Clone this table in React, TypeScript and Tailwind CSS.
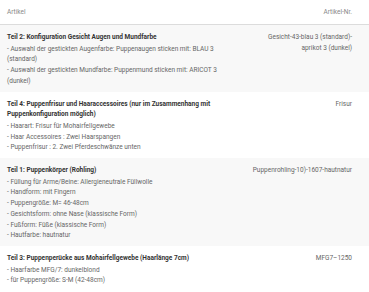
const rows = [
  {
    title: "Teil 2: Konfiguration Gesicht Augen und Mundfarbe",
    lines: [
      "- Auswahl der gestickten Augenfarbe: Puppenaugen sticken mit: BLAU 3 (standard)",
      "- Auswahl der gestickten Mundfarbe: Puppenmund sticken mit: ARICOT 3 (dunkel)",
    ],
    nr: "Gesicht-43-blau 3 (standard)-aprikot 3 (dunkel)",
  },
  {
    title:
      "Teil 4: Puppenfrisur und Haaraccessoires (nur im Zusammenhang mit Puppenkonfiguration möglich)",
    lines: [
      "- Haarart: Frisur für Mohairfellgewebe",
      "- Haar Accessoires : Zwei Haarspangen",
      "- Puppenfrisur : 2. Zwei Pferdeschwänze unten",
    ],
    nr: "Frisur",
  },
  {
    title: "Teil 1: Puppenkörper (Rohling)",
    lines: [
      "- Füllung für Arme/Beine: Allergieneutrale Füllwolle",
      "- Handform: mit Fingern",
      "- Puppengröße: M= 46-48cm",
      "- Gesichtsform: ohne Nase (klassische Form)",
      "- Fußform: Füße (klassische Form)",
      "- Hautfarbe: hautnatur",
    ],
    nr: "Puppenrohling-10)-1607-hautnatur",
  },
  {
    title: "Teil 3: Puppenperücke aus Mohairfellgewebe (Haarlänge 7cm)",
    lines: ["- Haarfarbe MFG/7: dunkelblond", "- für Puppengröße: S-M (42-48cm)"],
    nr: "MFG7–1250",
  },
];

export default function App() {
  return (
    <div className="w-[369px] h-[292px] overflow-hidden bg-white font-['Roboto',sans-serif] text-[6.5px] leading-[10.7px] text-[#666]">
      <div className="grid grid-cols-[1fr_127px] h-[25px] items-center px-[7px] border-b border-[#dcdcdc] text-[#888]">
        <div>Artikel</div>
        <div className="text-right pr-[10px]">Artikel-Nr.</div>
      </div>
      {rows.map((row, i) => (
        <div
          key={i}
          className={`grid grid-cols-[1fr_127px] px-[7px] pt-[7px] pb-[5px] ${
            i % 2 === 0 ? "bg-[#f8f8f8]" : "bg-white"
          }`}
        >
          <div className="pr-[4px]">
            <div className="font-bold text-[#333] mb-[1px]">{row.title}</div>
            {row.lines.map((l, j) => (
              <div key={j}>{l}</div>
            ))}
          </div>
          <div className="text-right pr-[10px] pl-[16px]">{row.nr}</div>
        </div>
      ))}
    </div>
  );
}
